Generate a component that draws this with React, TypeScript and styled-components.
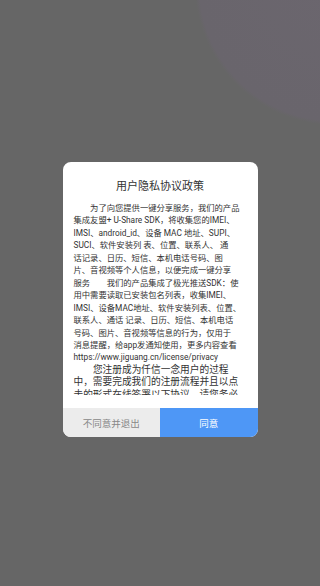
import React from "react";
import styled, { createGlobalStyle } from "styled-components";

const GlobalStyle = createGlobalStyle`
  html, body {
    margin: 0;
    padding: 0;
    height: 100%;
  }
  html {
    background: #666666;
  }
  body {
    font-family: Roboto, "Noto Sans CJK SC", "Noto Sans", sans-serif;
    overflow: hidden;
  }
`;

const Overlay = styled.div`
  width: 320px;
  height: 586px;
  display: flex;
  justify-content: center;
  align-items: flex-start;
  padding-top: 162px;
  box-sizing: border-box;
  background: radial-gradient(
    circle 140px at 335px -15px,
    #6b666e 0,
    #69656c 97%,
    #666666 100%
  );
`;

const Dialog = styled.div`
  width: 195px;
  height: 275px;
  background: #ffffff;
  border-radius: 8px;
  overflow: hidden;
  display: flex;
  flex-direction: column;
  padding-top: 17px;
  box-sizing: border-box;
`;

const Title = styled.h1`
  margin: 0;
  font-size: 11px;
  line-height: 16px;
  font-weight: 400;
  color: #333333;
  text-align: center;
`;

const Content = styled.div`
  margin-top: 7px;
  height: 193px;
  overflow: hidden;
  padding: 0 11px;
  color: #333333;
`;

const Paragraph = styled.p<{ $size: number; $lh: number }>`
  margin: 0;
  font-size: ${(p) => p.$size}px;
  line-height: ${(p) => p.$lh}px;
  text-indent: 2em;
  white-space: nowrap;
  letter-spacing: 0;
`;

const Buttons = styled.div`
  margin-top: auto;
  height: 29px;
  display: flex;
`;

const Button = styled.button<{ $primary?: boolean }>`
  flex: 1;
  border: none;
  margin: 0;
  padding: 0;
  font-family: inherit;
  font-size: 9.5px;
  background: ${(p) => (p.$primary ? "#4e97f6" : "#ececec")};
  color: ${(p) => (p.$primary ? "#ffffff" : "#888888")};
  display: flex;
  align-items: center;
  justify-content: center;
`;

const lines1 = [
  "为了向您提供一键分享服务，我们的产品",
  "集成友盟+ U-Share SDK，将收集您的IMEI、",
  "IMSI、android_id、设备 MAC 地址、SUPI、",
  "SUCI、软件安装列 表、位置、联系人、 通",
  "话记录、日历、短信、本机电话号码、图",
  "片、音视频等个人信息，以便完成一键分享",
  "服务\u3000\u3000我们的产品集成了极光推送SDK：使",
  "用中需要读取已安装包名列表，收集IMEI、",
  "IMSI、设备MAC地址、软件安装列表、位置、",
  "联系人、通话 记录、日历、短信、本机电话",
  "号码、图片、音视频等信息的行为，仅用于",
  "消息提醒，给app发通知使用，更多内容查看",
  "https://www.jiguang.cn/license/privacy",
];

const lines2 = [
  "您注册成为仟信一念用户的过程",
  "中，需要完成我们的注册流程并且以点",
  "击的形式在线签署以下协议，请您务必",
];

function renderLines(lines: string[]) {
  return lines.map((l, i) => (
    <React.Fragment key={i}>
      {l}
      {i < lines.length - 1 && <br />}
    </React.Fragment>
  ));
}

export default function App() {
  return (
    <>
      <GlobalStyle />
      <Overlay>
        <Dialog>
          <Title>用户隐私协议政策</Title>
          <Content>
            <Paragraph $size={8.3} $lh={12.45}>
              {renderLines(lines1)}
            </Paragraph>
            <Paragraph $size={9.7} $lh={12.6}>
              {renderLines(lines2)}
            </Paragraph>
          </Content>
          <Buttons>
            <Button>不同意并退出</Button>
            <Button $primary>同意</Button>
          </Buttons>
        </Dialog>
      </Overlay>
    </>
  );
}
